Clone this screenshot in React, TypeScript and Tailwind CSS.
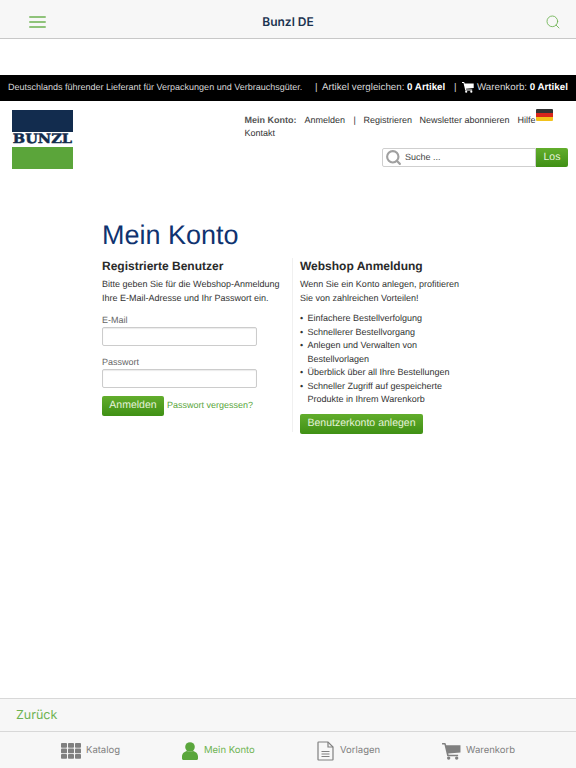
import React from 'react';
import { Search } from 'lucide-react';

const sans = "font-['Liberation_Sans',Arial,sans-serif]";
const ui = "font-['Inter','Noto_Sans',sans-serif]";
const greenBtn = 'bg-gradient-to-b from-[#62ad2c] to-[#3f9014] flex items-center justify-center text-[10.5px] text-[#e6f3dc]';

const MenuIcon = () => (
  <svg width="17" height="12" viewBox="0 0 17 12" stroke="#6db351" strokeWidth="1.5" strokeLinecap="round" className="shrink-0">
    <path d="M.8 1h15.400M.8 6h15.400M.8 11h15.400" />
  </svg>
);

const CatalogIcon = () => (
  <svg width="20" height="16" viewBox="0 0 20 16" fill="#808080" className="shrink-0">
    {[0, 5.5, 11].map((y) =>
      [0, 7, 14].map((x) => <rect key={`${x}-${y}`} x={x} y={y} width="6" height="4.8" rx="0.8" />)
    )}
  </svg>
);

const UserIcon = () => (
  <svg width="16" height="18" viewBox="0 0 16 18" fill="#5aa63c" className="shrink-0">
    <circle cx="8" cy="5" r="4.8" />
    <path d="M0 16.500v-2C0 11.500 2.500 9.500 5 9c1.800 1 4.200 1 6 0 2.500.5 5 2.500 5 5.500v2c0 1-1 1.500-2 1.500H2c-1 0-2-.5-2-1.500z" />
  </svg>
);

const DocIcon = () => (
  <svg width="17" height="20" viewBox="0 0 17 20" fill="none" stroke="#808080" strokeWidth="1.2" className="shrink-0">
    <path d="M1 1.500c0-.3.2-.5.5-.5H11l5 5v12.500c0 .3-.2.5-.5.500h-14c-.3 0-.5-.2-.5-.5z" />
    <path d="M11 1v5h5M4.500 10.500h8M4.500 13h8M4.500 15.500h8" />
  </svg>
);

const CartIcon = ({ size, color }: { size: string; color: string }) => (
  <svg className={`shrink-0 ${size}`} viewBox="0 0 20 18" fill={color}>
    <path d="M0 0h3.500l1 2.500H19.500v7.500L6.500 11.200l.4 1.300H17v1.500H5.500L2.500 1.500H0z" />
    <circle cx="7" cy="16" r="1.800" />
    <circle cx="15.500" cy="16" r="1.800" />
  </svg>
);

const TabItem = ({ icon, label, active, className }: { icon: React.ReactNode; label: string; active?: boolean; className: string }) => (
  <div className={`flex items-center ${className}`}>
    {icon}
    <span className={`text-[9.5px] ${active ? 'text-[#6db351]' : 'text-[#808080]'}`}>{label}</span>
  </div>
);

export default function App() {
  return (
    <div className={`h-screen flex flex-col bg-white overflow-hidden [text-rendering:geometricPrecision] ${sans}`}>
      {/* app bar */}
      <div className={`h-[39px] shrink-0 bg-[#f7f7f7] border-b border-[#c8c8c8] flex items-center justify-between pt-[5px] pl-[29px] pr-[15px] ${ui}`}>
        <div className="w-[26px]">
          <MenuIcon />
        </div>
        <span className="text-[12px] font-semibold text-[#1b3350]">Bunzl DE</span>
        <div className="w-[40px] flex justify-end">
          <Search className="w-[16px] h-[16px] text-[#6db351]" strokeWidth={1.3} />
        </div>
      </div>

      <div className="h-[36px] shrink-0" />

      {/* black bar */}
      <div className="h-[26px] shrink-0 bg-black text-[#d8d8d8] flex items-center pl-[8px] whitespace-nowrap">
        <span className="text-[9px] w-[307px]">Deutschlands führender Lieferant für Verpackungen und Verbrauchsgüter.</span>
        <span className="text-[9.75px] w-[7px]">|</span>
        <span className="text-[9.75px] w-[132px]">Artikel vergleichen: <b className="text-white">0 Artikel</b></span>
        <span className="text-[9.75px] w-[8px]">|</span>
        <CartIcon size="w-[12px] h-[11px] mr-[3px] mb-[1px]" color="#ffffff" />
        <span className="text-[9.75px]">Warenkorb: <b className="text-white">0 Artikel</b></span>
      </div>

      {/* header */}
      <div className="h-[97px] shrink-0 flex pt-[9px] pl-[12px]">
        <div className="w-[61px] h-[59px] flex flex-col">
          <div className="h-[22px] bg-[#122c4e]" />
          <div className="h-[15px] flex items-center justify-center">
            <span className="text-[13px] leading-none font-bold text-[#122c4e] scale-x-[1.12] [-webkit-text-stroke:0.5px_#122c4e] font-['DejaVu_Serif',serif]">BUNZL</span>
          </div>
          <div className="h-[22px] bg-[#5ba53a]" />
        </div>
        <div className="ml-[171.5px] flex-1 relative">
          <div className="text-[9px] leading-[13px] text-[#333] pt-[4px]">
            <div className="flex whitespace-nowrap">
              <b className="text-[#555] w-[60px]">Mein Konto:</b>
              <span className="w-[49px]">Anmelden</span>
              <span className="w-[10px]">|</span>
              <span className="w-[56px]">Registrieren</span>
              <span className="w-[98px]">Newsletter abonnieren</span>
              <span>Hilfe</span>
            </div>
            <div>Kontakt</div>
          </div>
          <div className="absolute left-[291px] top-[-1px] w-[17px] h-[12px] flex flex-col rounded-[1px] overflow-hidden">
            <div className="flex-1 bg-[#333]" />
            <div className="flex-1 bg-[#d8261c]" />
            <div className="flex-1 bg-[#f2c21c]" />
          </div>
          <div className="absolute left-[137.5px] top-[38px] flex h-[19px]">
            <div className="w-[154px] bg-white border border-[#cfcfcf] rounded-l-[2px] flex items-center">
              <Search className="w-[17px] h-[17px] ml-[2px] shrink-0 text-[#a0a0a0]" strokeWidth={3} />
              <span className="text-[9px] text-[#444] ml-[3px]">Suche ...</span>
            </div>
            <div className={`w-[32px] rounded-r-[2px] ${greenBtn}`}>Los</div>
          </div>
        </div>
      </div>

      {/* main */}
      <div className="flex-1 pl-[102px]">
        <h1 className="text-[27px] leading-[34px] text-[#0f3370] mt-[20px]">Mein Konto</h1>
        <div className="flex mt-[6px]">
          <div className="w-[191px] border-r border-[#f0f0f0] h-[174px]">
            <h2 className="text-[12px] leading-[16px] font-bold text-[#2a2a2a]">Registrierte Benutzer</h2>
            <p className="text-[9px] leading-[13.5px] text-[#333] mt-[4px]">Bitte geben Sie für die Webshop-Anmeldung<br />Ihre E-Mail-Adresse und Ihr Passwort ein.</p>
            <div className="text-[9px] leading-[13px] text-[#666] mt-[9px]">E-Mail</div>
            <div className="w-[155px] h-[19px] bg-white border border-[#ccc] rounded-[2px] shadow-[inset_0_1px_1px_rgba(0,0,0,0.08)]" />
            <div className="text-[9px] leading-[13px] text-[#666] mt-[10px]">Passwort</div>
            <div className="w-[155px] h-[19px] bg-white border border-[#ccc] rounded-[2px] shadow-[inset_0_1px_1px_rgba(0,0,0,0.08)]" />
            <div className="flex items-center mt-[8px]">
              <div className={`w-[62px] h-[20px] rounded-[2px] ${greenBtn}`}>Anmelden</div>
              <span className="text-[9px] text-[#5aa63c] ml-[3px]">Passwort vergessen?</span>
            </div>
          </div>
          <div className="pl-[7px]">
            <h2 className="text-[12px] leading-[16px] font-bold text-[#2a2a2a]">Webshop Anmeldung</h2>
            <p className="text-[9px] leading-[13.5px] text-[#333] mt-[4px]">Wenn Sie ein Konto anlegen, profitieren<br />Sie von zahlreichen Vorteilen!</p>
            <ul className="text-[9px] leading-[13.5px] text-[#333] mt-[7px]">
              {[
                ['Einfachere Bestellverfolgung'],
                ['Schnellerer Bestellvorgang'],
                ['Anlegen und Verwalten von', 'Bestellvorlagen'],
                ['Überblick über all Ihre Bestellungen'],
                ['Schneller Zugriff auf gespeicherte', 'Produkte in Ihrem Warenkorb'],
              ].map((lines) => (
                <li key={lines[0]} className="flex">
                  <span className="w-[7.5px]">•</span>
                  <span>{lines.map((l, i) => <React.Fragment key={l}>{i > 0 && <br />}{l}</React.Fragment>)}</span>
                </li>
              ))}
            </ul>
            <div className={`w-[123px] h-[19.5px] mt-[7.5px] rounded-[2px] ${greenBtn}`}>Benutzerkonto anlegen</div>
          </div>
        </div>
      </div>

      {/* back bar */}
      <div className={`h-[34px] shrink-0 bg-[#f7f7f7] border-y border-[#d8d8d8] flex items-center pl-[16px] pt-[2px] text-[12.5px] text-[#6db351] ${ui}`}>Zurück</div>

      {/* tab bar */}
      <div className={`h-[36px] shrink-0 bg-[#f7f7f7] flex items-center pt-[2px] ${ui}`}>
        <TabItem className="ml-[61px] w-[121px] gap-[5px]" icon={<CatalogIcon />} label="Katalog" />
        <TabItem className="w-[135px] gap-[6px]" icon={<UserIcon />} label="Mein Konto" active />
        <TabItem className="w-[125px] gap-[6px]" icon={<DocIcon />} label="Vorlagen" />
        <TabItem className="gap-[5px]" icon={<CartIcon size="w-[19px] h-[17px]" color="#808080" />} label="Warenkorb" />
      </div>
    </div>
  );
}
